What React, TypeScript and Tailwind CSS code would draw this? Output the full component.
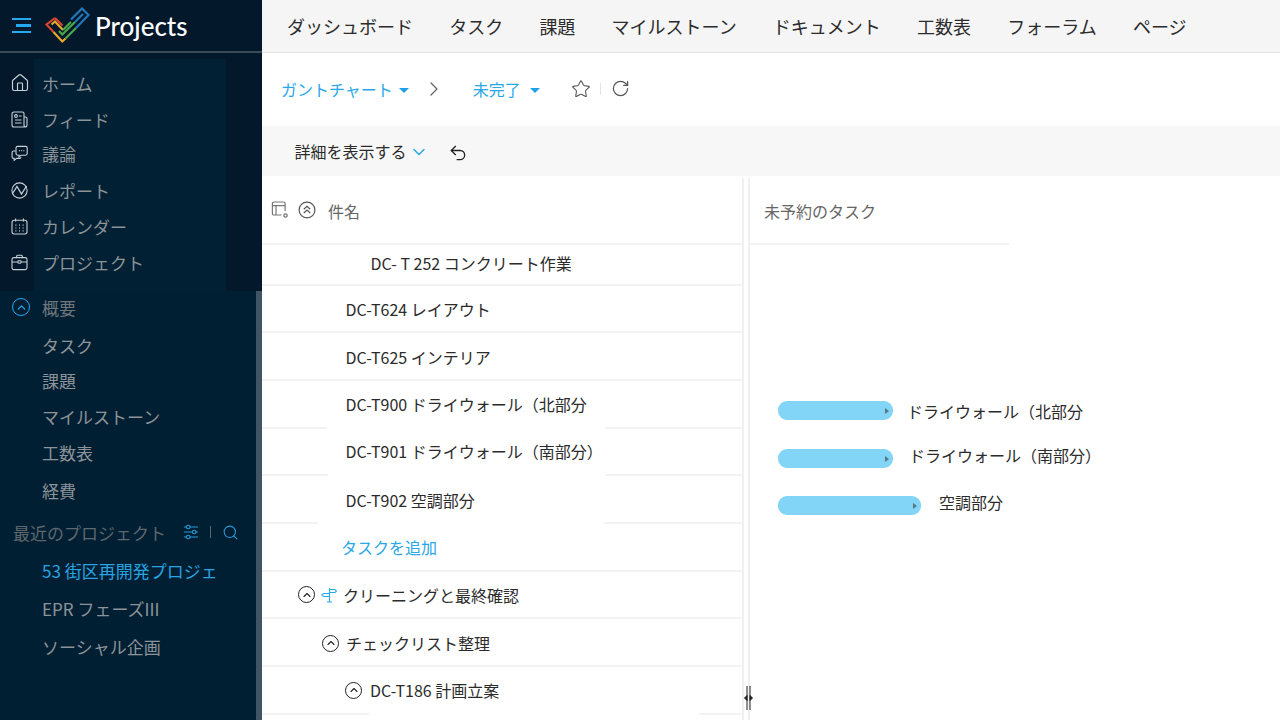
import { ChevronDown, ChevronRight, ChevronUp, Home, RotateCw, Search, Star, Undo2 } from "lucide-react";
import type { ReactNode } from "react";

const FONT = "[font-family:'Noto_Sans_CJK_JP','Noto_Sans',sans-serif]";

const NAV = ["ダッシュボード", "タスク", "課題", "マイルストーン", "ドキュメント", "工数表", "フォーラム", "ページ"];

function Logo() {
  return (
    <svg width="45" height="37" viewBox="0 0 45 37" fill="none" strokeWidth="2.2" strokeLinecap="butt">
      <path d="M10 11 L1.5 17.5 L8.5 25" stroke="#d9452f" />
      <path d="M8.5 25 L17.3 34.5 L20.5 31.5" stroke="#e9a72c" />
      <path d="M6.5 17.5 L10 14.5 L18 23" stroke="#e9a72c" />
      <path d="M10 11 L17.5 18.5" stroke="#d9452f" />
      <path d="M20.5 31.5 L31 21" stroke="#4ea84a" />
      <path d="M14 24 L17.3 27.5 L30 15 M18 23 L26 15" stroke="#4ea84a" />
      <path d="M31 21 L43.5 8 L37 1.5 L26 12.5 M30 15 L38 7" stroke="#2277b8" />
    </svg>
  );
}

function ReportIcon() {
  return (
    <svg width="17" height="17" viewBox="0 0 17 17" fill="none" stroke="#c9d0d6" strokeWidth="1.1">
      <circle cx="8.5" cy="8.5" r="7.6" />
      <path d="M1.5 11.5 L6 4.5 L10.5 12 L15.5 4" strokeWidth="1.3" />
    </svg>
  );
}

function ChatIcon() {
  return (
    <svg width="17" height="17" viewBox="0 0 17 17" fill="none" stroke="#c9d0d6" strokeWidth="1.1">
      <path d="M5 3 a1.6 1.6 0 0 1 1.6 -1.6 h8 a1.6 1.6 0 0 1 1.6 1.6 v5.6 a1.6 1.6 0 0 1 -1.6 1.6 h-4.6 l-2 1.8 v-1.8 h-1.4 a1.6 1.6 0 0 1 -1.6 -1.6 z" />
      <path d="M4.6 6 h-2 a1.5 1.5 0 0 0 -1.5 1.5 v4.4 a1.5 1.5 0 0 0 1.5 1.5 h0.6 v2 l2.4 -2 h3 a1.5 1.5 0 0 0 1.4 -1.4" />
      <path d="M8 5.6 h0.9 M10.2 5.6 h0.9 M12.4 5.6 h0.9" />
    </svg>
  );
}

function FeedIcon() {
  return (
    <svg width="17" height="17" viewBox="0 0 17 17" fill="none" stroke="#c9d0d6" strokeWidth="1.1">
      <path d="M3 1 h8.5 a1.5 1.5 0 0 1 1.5 1.5 V14 a2 2 0 0 0 2 2 H3 a2 2 0 0 1 -2 -2 V3 a2 2 0 0 1 2 -2 z" />
      <path d="M13 6 h1.5 a1.5 1.5 0 0 1 1.5 1.5 V14 a2 2 0 0 1 -1 2" />
      <circle cx="5" cy="5" r="1.4" />
      <path d="M4 9 H10.5 M4 12 H10.5 M8 5 H10.5" />
    </svg>
  );
}

function CalendarIcon() {
  return (
    <svg width="17" height="17" viewBox="0 0 17 17" fill="none" stroke="#c9d0d6" strokeWidth="1.1">
      <rect x="1" y="2.2" width="15" height="13.8" rx="2.2" />
      <path d="M4.6 0.6 V3.6 M12.4 0.6 V3.6" />
      <path d="M4.4 7.2 h1 M8 7.2 h1 M11.6 7.2 h1 M4.4 10 h1 M8 10 h1 M11.6 10 h1 M4.4 12.8 h1 M8 12.8 h1 M11.6 12.8 h1" strokeWidth="1.2" />
    </svg>
  );
}

function BriefcaseIcon() {
  return (
    <svg width="17" height="17" viewBox="0 0 17 17" fill="none" stroke="#c9d0d6" strokeWidth="1.1">
      <rect x="1" y="3.6" width="15" height="12" rx="1.8" />
      <path d="M5.6 3.6 V2.4 a1.2 1.2 0 0 1 1.2 -1.2 h3.4 a1.2 1.2 0 0 1 1.2 1.2 V3.6" />
      <path d="M1 8 H7 M10 8 H16" />
      <rect x="7" y="6.8" width="3" height="2.4" rx="0.6" />
    </svg>
  );
}

function SlidersIcon() {
  return (
    <svg width="16" height="16" viewBox="0 0 16 16" fill="none" stroke="#2a9ad8" strokeWidth="1.1">
      <path d="M1 3 H3.4 M7 3 H15 M1 8 H9.4 M13 8 H15 M1 13 H3.4 M7 13 H15" />
      <circle cx="5.2" cy="3" r="1.8" />
      <circle cx="11.2" cy="8" r="1.8" />
      <circle cx="5.2" cy="13" r="1.8" />
    </svg>
  );
}

function CollapseAllIcon() {
  return (
    <svg width="18" height="18" viewBox="0 0 18 18" fill="none" stroke="#555" strokeWidth="1.2">
      <circle cx="9" cy="9" r="7.9" />
      <path d="M5.8 8.2 L9 5.2 L12.2 8.2 M5.8 12 L9 9 L12.2 12" />
    </svg>
  );
}

function TableSettingsIcon() {
  return (
    <svg width="18" height="18" viewBox="0 0 18 18" fill="none" stroke="#777" strokeWidth="1.2">
      <path d="M10.5 14 H3 a1.6 1.6 0 0 1 -1.6 -1.6 V2.6 A1.6 1.6 0 0 1 3 1 h9.5 a1.6 1.6 0 0 1 1.6 1.6 V10" />
      <path d="M1.4 4.6 H14 M5 4.6 V14" />
      <circle cx="14.5" cy="14.5" r="1.7" strokeWidth="1.3" />
    </svg>
  );
}

function MilestoneIcon() {
  return (
    <svg width="16" height="16" viewBox="0 0 16 16" fill="none" stroke="#29a9ea" strokeWidth="1.1">
      <path d="M8.5 1 V15 M6 15 H11" />
      <path d="M8.5 2.5 H14 L15.5 4 L14 5.5 H8.5 M8.5 6.5 H2.5 L0.8 8 L2.5 9.5 H8.5" />
    </svg>
  );
}

function RowToggle() {
  return (
    <span className="flex h-[17px] w-[17px] shrink-0 items-center justify-center rounded-full border-[1.3px] border-[#222]">
      <ChevronUp size={12} strokeWidth={2.2} color="#222" />
    </span>
  );
}

function Item({ label, tone = "text-[#8d9499]", className = "" }: { label: string; tone?: string; className?: string }) {
  return <div className={`flex items-center text-[17px] leading-none whitespace-nowrap ${tone} ${className}`}>{label}</div>;
}

const TOP_ITEMS: { icon: ReactNode; label: string; offset: string }[] = [
  { icon: <Home size={20} strokeWidth={1.4} color="#c9d0d6" />, label: "ホーム", offset: "" },
  { icon: <FeedIcon />, label: "フィード", offset: "" },
  { icon: <ChatIcon />, label: "議論", offset: "-mt-[2px]" },
  { icon: <ReportIcon />, label: "レポート", offset: "mt-[1px]" },
  { icon: <CalendarIcon />, label: "カレンダー", offset: "" },
  { icon: <BriefcaseIcon />, label: "プロジェクト", offset: "" },
];

function Sidebar() {
  return (
    <aside className="flex h-full w-[262px] shrink-0 flex-col bg-[#001f33]">
      <div className="flex h-[53px] shrink-0 items-center border-b-2 border-[#3b4a56] bg-[#03182a]">
        <div className="ml-3 flex w-[19px] flex-col items-end gap-[4px]">
          <span className="h-[2.5px] w-full bg-[#23a9f2]" />
          <span className="h-[2.5px] w-[15px] bg-[#23a9f2]" />
          <span className="h-[2.5px] w-full bg-[#23a9f2]" />
        </div>
        <div className="ml-[14px]">
          <Logo />
        </div>
        <span className="ml-[5px] text-[26px] leading-none font-medium text-white [font-family:Lato,sans-serif]">Projects</span>
      </div>
      <div className="flex h-[238px] shrink-0 bg-[#03192b]">
        <div className="flex w-[34px] flex-col pt-[12px]">
          {TOP_ITEMS.map((it) => (
            <div key={it.label} className={`flex h-9 items-center justify-center pl-[5px] ${it.offset}`}>
              {it.icon}
            </div>
          ))}
        </div>
        <div className="mt-[6px] flex w-[192px] flex-col bg-[#012033] pt-[6px] pl-2">
          {TOP_ITEMS.map((it) => (
            <Item key={it.label} label={it.label} className={`h-9 ${it.offset}`} />
          ))}
        </div>
      </div>
      <div className="relative flex-1">
        <div className="absolute top-0 right-0 bottom-0 w-[6px] bg-[#3f5564]" />
        <div className="-mt-[2px] flex h-9 items-center">
          <span className="ml-3 flex h-[18px] w-[18px] items-center justify-center rounded-full border-[1.5px] border-[#23a9f2]">
            <ChevronUp size={13} color="#23a9f2" strokeWidth={2.2} />
          </span>
          <span className="ml-3 text-[17px] leading-none text-[#6f777d]">概要</span>
        </div>
        <div className="pl-[42px]">
          <Item label="タスク" className="mt-[2px] h-9" />
          <Item label="課題" className="-mt-[1px] h-9" />
          <Item label="マイルストーン" className="h-9" />
          <Item label="工数表" className="h-9" />
          <Item label="経費" className="mt-[2px] h-9" />
        </div>
        <div className="mt-[6px] flex h-9 items-center pl-[13px]">
          <span className="text-[17px] leading-none text-[#5f686e]">最近のプロジェクト</span>
          <span className="ml-[17px]">
            <SlidersIcon />
          </span>
          <span className="mx-[11px] h-3 w-px bg-[#5f686e]" />
          <Search size={17} strokeWidth={1.5} color="#2a9ad8" />
        </div>
        <div className="pl-[42px]">
          <Item label="53 街区再開発プロジェ" tone="text-[#29a4e2]" className="mt-[2px] h-9" />
          <Item label="EPR フェーズIII" className="mt-[2px] h-9" />
          <Item label="ソーシャル企画" className="mt-[2px] h-9" />
        </div>
      </div>
    </aside>
  );
}

type Row = { h: string; pad: string; cut?: string; content: ReactNode };

const ROWS: Row[] = [
  { h: "h-[39px]", pad: "pl-[108.5px] pb-[4px]", content: "DC- T 252 コンクリート作業" },
  { h: "h-[45px]", pad: "pl-[83.5px]", content: "DC-T624 レイアウト" },
  { h: "h-[46px]", pad: "pl-[83.5px] pt-[2px]", content: "DC-T625 インテリア" },
  { h: "h-[46px]", pad: "pl-[83.5px]", cut: "ml-[65px] w-[278px]", content: "DC-T900 ドライウォール（北部分" },
  { h: "h-[45px]", pad: "pl-[83.5px] pb-[2px]", cut: "ml-[66px] w-[277px]", content: "DC-T901 ドライウォール（南部分）" },
  { h: "h-[46px]", pad: "pl-[83.5px] pt-[2px]", cut: "ml-[56px] w-[286px]", content: "DC-T902 空調部分" },
  { h: "h-[46px]", pad: "pl-[79px]", content: <span className="text-[#2aa7e8]">タスクを追加</span> },
  {
    h: "h-[45px]",
    pad: "pl-[36px]",
    content: (
      <>
        <RowToggle />
        <span className="mr-[6px] ml-[6px]">
          <MilestoneIcon />
        </span>
        クリーニングと最終確認
      </>
    ),
  },
  {
    h: "h-[46px]",
    pad: "pl-[60px] pt-[2px]",
    content: (
      <>
        <RowToggle />
        <span className="ml-[7px]">チェックリスト整理</span>
      </>
    ),
  },
  {
    h: "h-[46px]",
    pad: "pl-[83px]",
    cut: "ml-[107px] w-[330px]",
    content: (
      <>
        <RowToggle />
        <span className="ml-2">DC-T186 計画立案</span>
      </>
    ),
  },
];

function TaskRow({ row }: { row: Row }) {
  return (
    <div>
      <div className={`flex items-center text-[16px] leading-none whitespace-nowrap text-[#2b2b2b] ${row.h} ${row.pad}`}>{row.content}</div>
      <div className="h-[2px] bg-[#f3f3f3]">{row.cut && <div className={`h-full bg-white ${row.cut}`} />}</div>
    </div>
  );
}

function Bar({ w, label, gap, mt, shift }: { w: string; label: string; gap: string; mt: string; shift: string }) {
  return (
    <div className={`flex h-[19px] items-center ${mt}`}>
      <div className={`flex h-[19px] items-center justify-end rounded-[9px] bg-[#82d5f6] pr-[4px] ${w}`}>
        <span className="h-0 w-0 border-y-[3.5px] border-l-[4px] border-y-transparent border-l-[#5b7683]" />
      </div>
      <span className={`text-[16px] leading-none whitespace-nowrap text-[#2b2b2b] ${gap} ${shift}`}>{label}</span>
    </div>
  );
}

export default function App() {
  return (
    <div className={`flex h-[720px] w-[1280px] overflow-hidden bg-white ${FONT}`}>
      <Sidebar />
      <main className="flex min-w-0 flex-1 flex-col">
        <nav className="flex h-[53px] shrink-0 items-center gap-[36.2px] border-b border-[#e4e4e4] bg-[#f5f5f5] pl-[25px] text-[18px] leading-none text-[#2b2b2b]">
          {NAV.map((n) => (
            <span key={n} className="whitespace-nowrap">
              {n}
            </span>
          ))}
        </nav>
        <div className="flex h-[73px] shrink-0 items-center pb-[2px] pl-[19px] text-[16px] leading-none text-[#2aa7e8]">
          <span>ガントチャート</span>
          <span className="mt-[4px] ml-[6px] h-0 w-0 border-x-[5.5px] border-t-[5px] border-x-transparent border-t-[#1f9fe6]" />
          <ChevronRight size={24} strokeWidth={1.3} color="#666" className="ml-[13px]" />
          <span className="ml-[27px]">未完了</span>
          <span className="mt-[4px] ml-[9px] h-0 w-0 border-x-[5.5px] border-t-[5px] border-x-transparent border-t-[#1f9fe6]" />
          <Star size={20} strokeWidth={1.3} color="#555" className="ml-[31px]" />
          <span className="ml-[9px] h-3 w-px bg-[#e2e2e2]" />
          <RotateCw size={19} strokeWidth={1.5} color="#555" className="ml-[10px]" />
        </div>
        <div className="flex h-[50px] shrink-0 items-center bg-[#f7f7f7] pl-[32.5px] text-[16px] leading-none text-[#2b2b2b]">
          <span>詳細を表示する</span>
          <ChevronDown size={20} strokeWidth={1.8} color="#2aa7e8" className="mt-[2px] ml-[2.5px]" />
          <Undo2 size={20} strokeWidth={1.6} color="#222" className="mt-[3px] ml-[19px]" />
        </div>
        <div className="flex min-h-0 flex-1 pt-[2px]">
          <div className="w-[482px] shrink-0 border-r-2 border-[#f0f0f0]">
            <div className="flex h-[67px] items-center border-b-2 border-[#f3f3f3] pl-[9px] text-[16px] leading-none text-[#666]">
              <span className="mb-[1px]">
                <TableSettingsIcon />
              </span>
              <span className="mb-[1px] ml-[9px]">
                <CollapseAllIcon />
              </span>
              <span className="ml-[12px]">件名</span>
            </div>
            {ROWS.map((r, i) => (
              <TaskRow key={i} row={r} />
            ))}
          </div>
          <div className="relative w-[6px] shrink-0 border-r-2 border-[#f0f0f0] bg-white">
            <svg width="9" height="24" viewBox="0 0 9 24" className="absolute top-[508px] left-[0px]" stroke="#222" strokeWidth="1" fill="#222">
              <path d="M3 0 V24 M6 0 V24" />
              <path d="M3 9.5 L0.5 12 L3 14.5 Z M6 9.5 L8.5 12 L6 14.5 Z" />
            </svg>
          </div>
          <div className="min-w-0 flex-1">
            <div className="flex h-[67px] w-[259px] items-center border-b-2 border-[#f3f3f3] pl-[14px] text-[16px] leading-none text-[#666]">未予約のタスク</div>
            <div className="pt-[156px] pl-[28px]">
              <Bar w="w-[115px]" label="ドライウォール（北部分" gap="ml-[14px]" mt="" shift="mt-[1px]" />
              <Bar w="w-[115px]" label="ドライウォール（南部分）" gap="ml-[16px]" mt="mt-[29px]" shift="mb-[8px]" />
              <Bar w="w-[143px]" label="空調部分" gap="ml-[18px]" mt="mt-[28px]" shift="mb-[8px]" />
            </div>
          </div>
        </div>
      </main>
    </div>
  );
}
